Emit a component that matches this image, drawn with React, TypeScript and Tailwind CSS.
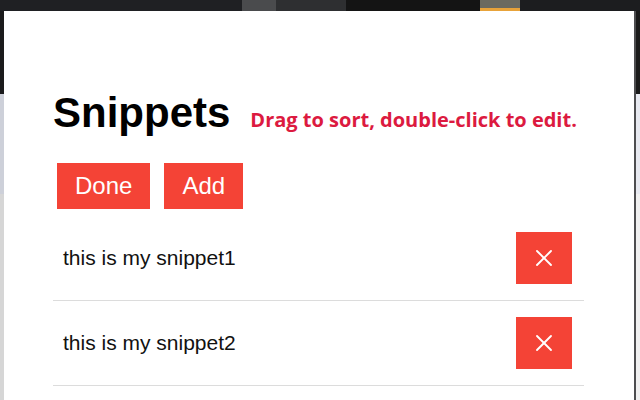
import { X } from "lucide-react";

type Snippet = {
  id: number;
  text: string;
};

const snippets: Snippet[] = [
  { id: 1, text: "this is my snippet1" },
  { id: 2, text: "this is my snippet2" },
];

export default function App() {
  return (
    <div className="w-[640px] h-[400px] overflow-hidden flex flex-col bg-[#202124] font-['Liberation_Sans',Arial,sans-serif]">
      {/* top strip of the page behind */}
      <div className="h-[11px] shrink-0 flex">
        <div className="w-[242px] bg-[#1f2023]" />
        <div className="w-[34px] bg-[#4a4b4d]" />
        <div className="w-[70px] bg-[#2e2f31]" />
        <div className="w-[134px] bg-[#141414]" />
        <div className="w-[40px] flex flex-col">
          <div className="flex-1 bg-[#6b6a5f]" />
          <div className="h-[3px] bg-[#e8a33a]" />
        </div>
        <div className="flex-1 bg-[#1c1d1f]" />
      </div>

      <div className="flex flex-1 min-h-0">
        <div className="w-[4px] shrink-0 flex flex-col">
          <div className="h-[83px] bg-[#1b1b1c]" />
          <div className="h-[100px] bg-[#cdd0d9]" />
          <div className="flex-1 bg-[#d6d6d6]" />
        </div>

        {/* popup */}
        <main className="w-[630px] shrink-0 bg-white pl-[49px] pr-[50px]">
          <div className="mt-[80px] flex items-baseline">
            <h1 className="text-[42px] leading-[44px] font-bold text-black">Snippets</h1>
            <p className="ml-[20px] text-[20px] font-bold text-[#dc1a40] font-['Open_Sans',sans-serif]">
              Drag to sort, double-click to edit.
            </p>
          </div>

          <div className="mt-[28px] flex gap-[14px] pl-[4px]">
            <button className="h-[46px] px-[18px] bg-[#f44336] text-white text-[24px]">Done</button>
            <button className="h-[46px] px-[18px] bg-[#f44336] text-white text-[24px]">Add</button>
          </div>

          <ul className="mt-[7px]">
            {snippets.map((s) => (
              <li
                key={s.id}
                className="h-[85px] flex items-center justify-between border-b border-[#dcdcdc] pl-[10px] pr-[12px]"
              >
                <span className="text-[21px] text-[#111]">{s.text}</span>
                <button className="w-[56px] h-[52px] bg-[#f44336] flex items-center justify-center text-white">
                  <X size={28} strokeWidth={1.6} />
                </button>
              </li>
            ))}
          </ul>
        </main>

        <div className="flex-1 flex">
          <div className="w-[2px] bg-[#4d4d4f]" />
          <div className="flex-1 flex flex-col">
            <div className="h-[83px] bg-[#1a1a1a]" />
            <div className="h-[100px] bg-[#e7e9f0]" />
            <div className="flex-1 bg-[#f0f0f0]" />
          </div>
        </div>
      </div>
    </div>
  );
}
